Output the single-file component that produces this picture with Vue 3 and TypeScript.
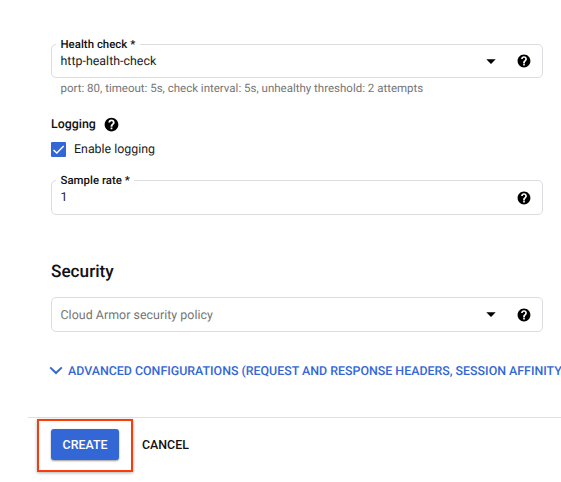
<script setup lang="ts">
import { h, ref, type FunctionalComponent } from 'vue'

const loggingEnabled = ref(true)

const HelpIcon: FunctionalComponent = () =>
  h('svg', { viewBox: '0 0 24 24', 'aria-hidden': 'true' }, [
    h('path', {
      fill: 'currentColor',
      d: 'M12 1C5.920 1 1 5.920 1 12s4.920 11 11 11 11-4.920 11-11S18.080 1 12 1zm1.400 18.500h-2.800v-2.800h2.800zM16.100 11.300l-1.100 1.100c-.95.95-1.500 1.700-1.500 3.300h-3v-.7c0-1.300.55-2.400 1.400-3.300l1.500-1.500c.45-.4.7-1 .7-1.600 0-1.150-.9-2-2.100-2s-2.100.9-2.100 2.100H7C7 5.900 9.200 3.900 12 3.900s5 2 5 4.700c0 1.050-.3 2-.9 2.700z',
    }),
  ])
</script>

<template>
  <main class="page">
    <section class="form">
      <div class="field">
        <span class="label">Health check *</span>
        <span class="value">http-health-check</span>
        <svg class="caret" viewBox="0 0 10 5"><path d="M0.300 0.200H9.700L5 5Z" /></svg>
        <HelpIcon class="help" />
      </div>
      <p class="hint">port: 80, timeout: 5s, check interval: 5s, unhealthy threshold: 2 attempts</p>

      <div class="logging">
        <span class="text">Logging</span>
        <HelpIcon class="help large" />
      </div>
      <div class="check" role="checkbox" :aria-checked="loggingEnabled" @click="loggingEnabled = !loggingEnabled">
        <span class="box">
          <svg v-if="loggingEnabled" viewBox="0 0 15 15"><path d="M2.500 7.900L5.800 11.100L12.700 4" /></svg>
        </span>
        <span class="text">Enable logging</span>
      </div>

      <div class="field sample">
        <span class="label">Sample rate *</span>
        <span class="value">1</span>
        <HelpIcon class="help" />
      </div>

      <h2>Security</h2>
      <div class="field policy">
        <span class="value placeholder">Cloud Armor security policy</span>
        <svg class="caret" viewBox="0 0 10 5"><path d="M0.300 0.200H9.700L5 5Z" /></svg>
        <HelpIcon class="help" />
      </div>

      <a class="advanced">
        <svg viewBox="0 0 14 9"><path d="M1.200 1.400L7 7L12.800 1.400" /></svg>
        <span class="text">ADVANCED CONFIGURATIONS (REQUEST AND RESPONSE HEADERS, SESSION AFFINITY</span>
      </a>
    </section>

    <footer class="actions">
      <div class="highlight"><button class="create">CREATE</button></div>
      <button class="cancel">CANCEL</button>
    </footer>
  </main>
</template>

<style>
body {
  overflow: hidden;
  background: #fff;
}
</style>

<style scoped>
.page {
  box-sizing: border-box;
  width: 561px;
  height: 482px;
  overflow: hidden;
  padding-top: 44px;
  background: #fff;
  color: #1c1c1c;
  font: 12.4px/16px Roboto, sans-serif;
  text-rendering: geometricPrecision;
}
.form {
  height: 373px;
  padding-left: 51px;
}
.field {
  position: relative;
  box-sizing: border-box;
  display: flex;
  align-items: center;
  width: 492px;
  height: 34px;
  padding: 0 11px 0 8.5px;
  border: 1px solid #dadce0;
  border-radius: 5px;
}
.label {
  position: absolute;
  top: -9px;
  left: 4px;
  padding: 0 4.5px;
  background: #fff;
  color: #111;
  font-size: 11.4px;
  font-weight: 500;
  letter-spacing: 0.03px;
  line-height: 17px;
}
.value {
  flex: 1;
  padding-top: 2px;
  letter-spacing: 0.02px;
}
.sample .value {
  padding-top: 1px;
}
.text {
  padding-top: 2px;
}
.caret {
  width: 10px;
  height: 5px;
  margin-right: 21px;
  fill: #000;
}
.help {
  width: 14px;
  height: 14px;
  color: #000;
}
.help.large {
  width: 15px;
  height: 15px;
}
.hint {
  margin: 2px 0 0 9.5px;
  color: #757575;
  font-size: 11.5px;
}
.logging {
  display: flex;
  align-items: center;
  gap: 8px;
  height: 16px;
  margin-top: 20px;
  color: #111;
  font-weight: 500;
}
.check {
  display: flex;
  align-items: center;
  gap: 8px;
  height: 16px;
  margin-top: 9px;
}
.box {
  width: 15px;
  height: 15px;
  border-radius: 1px;
  background: #3367d6;
}
.box svg {
  display: block;
}
.box path {
  fill: none;
  stroke: #fff;
  stroke-width: 1.4;
}
.sample {
  height: 35px;
  margin-top: 23px;
}
h2 {
  height: 22px;
  margin: 46px 0 0;
  color: #111;
  font-size: 17.2px;
  font-weight: 500;
  line-height: 23px;
}
.policy {
  height: 35px;
  margin-top: 14px;
}
.placeholder {
  color: #757575;
  letter-spacing: 0.04px;
}
.advanced {
  display: flex;
  align-items: center;
  gap: 5px;
  height: 16px;
  margin: 30px 0 0 -2px;
  color: #3367d6;
  font-weight: 500;
  white-space: nowrap;
}
.advanced .text {
  padding-top: 3px;
}
.advanced svg {
  flex: none;
  width: 14px;
  height: 9px;
  fill: none;
  stroke: currentColor;
  stroke-width: 2;
}
.actions {
  display: flex;
  align-items: flex-start;
  height: 64px;
  margin-left: 28px;
  padding: 1px 0 0 9px;
  border-top: 1px solid #e0e0e0;
}
.highlight {
  box-sizing: border-box;
  width: 96px;
  height: 53px;
  padding: 8px 12px;
  border: 2px solid #f83c0a;
  box-shadow: 0 1px 3px rgba(0, 0, 0, 0.3);
}
button {
  border: 0;
  font: 500 12.4px/16px Roboto, sans-serif;
}
.create {
  display: block;
  width: 68px;
  height: 31px;
  padding: 0;
  border-radius: 3px;
  background: #3367d6;
  color: #fff;
  box-shadow: 0 1px 2px rgba(0, 0, 0, 0.4);
}
.cancel {
  margin-top: 18px;
  padding: 0 0 0 9px;
  background: transparent;
  color: #111;
}
</style>
